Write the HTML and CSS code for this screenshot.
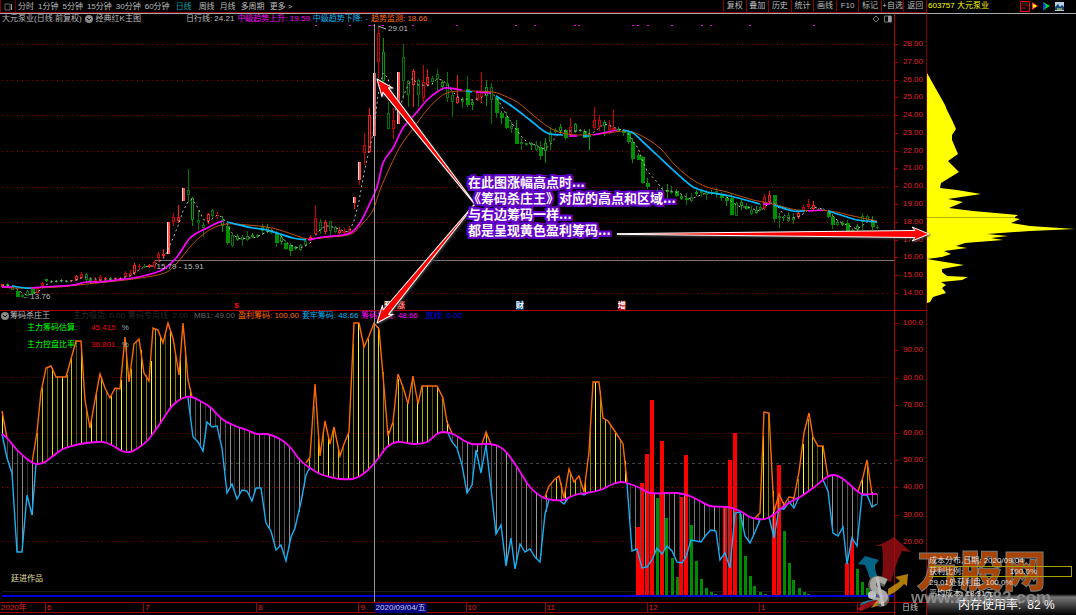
FILE: index.html
```html
<!DOCTYPE html>
<html lang="zh-CN">
<head>
<meta charset="utf-8">
<title>大元泵业 603757</title>
<link rel="stylesheet" href="styles.css">
</head>
<body>
<div class="app">
  <main class="main">
    <nav class="toolbar">
      <button class="layout-btn" aria-label="布局"><svg width="9" height="8" viewBox="0 0 9 8"><path d="M1 1h5v6h-5z" fill="none" stroke="#666"/><path d="M7.500 1v6" stroke="#999"/></svg></button>
      <div class="periods">
        <button>分时</button><button>1分钟</button><button>5分钟</button><button>15分钟</button><button>30分钟</button><button>60分钟</button><button class="active">日线</button><button>周线</button><button>月线</button><button>多周期</button><button>更多 &gt;</button>
      </div>
      <div class="tools">
        <button>复权</button><button>叠加</button><button>历史</button><button>统计</button><button>画线</button><button>F10</button><button>标记</button><button>+自选</button><button>返回</button>
      </div>
    </nav>

    <section class="pane price">
      <svg class="plot" id="price" viewBox="0 14 894 296" preserveAspectRatio="none"></svg>
      <header class="legend">
        <span>大元泵业(日线.前复权)</span>
        <svg class="dot" viewBox="0 0 8 8"><circle cx="4" cy="4" r="4" fill="#888"/><path d="M2 3l2 2 2-2" fill="none" stroke="#111"/></svg>
        <span class="name-main">经典红K主图</span>
        <span>日行线: 24.21</span><span class="magenta">中级趋势上升: 19.59</span><span class="cyan">中级趋势下降: -</span><span class="orange">趋势监测: 18.66</span>
        <svg class="corner" viewBox="0 0 20 8"><path d="M4 1l3 3-3 3-3-3z" fill="none" stroke="#777"/><path d="M12.500 1h7v6h-7z" fill="none" stroke="#777"/><path d="M16 1h3v6h-3z" fill="#999"/></svg>
      </header>
      <span class="tag high">29.01</span>
      <span class="tag low">←13.76</span>
      <span class="tag range">15.79 - 15.91</span>
      <span class="mark m1">$</span><span class="mark m2">预</span><span class="mark m3">涨</span><span class="mark m4">财</span><span class="mark m5">增</span>
    </section>
    <aside class="axis axis-price" id="axisPrice"></aside>

    <section class="pane chips">
      <svg class="plot" id="chips" viewBox="0 311 894 291" preserveAspectRatio="none"></svg>
      <div class="over">
        <header class="legend">
          <svg class="dot" viewBox="0 0 8 8"><circle cx="4" cy="4" r="4" fill="#888"/><path d="M2 3l2 2 2-2" fill="none" stroke="#111"/></svg>
          <span class="name-sub">筹码杀庄王</span>
          <span class="faint">主力吸货: 0.00</span><span class="faint name-line">筹码专用线: 2.00</span><span class="dim">MB1: 49.00</span><span class="orange">盈利筹码: 100.00</span><span class="cyan">套牢筹码: 48.66</span><span class="magenta">筹码均线: 48.66</span><span class="blue">底线: 0.00</span>
        </header>
        <dl class="stats">
          <dt>主力筹码估算:</dt><dd>45.415 <i>%</i></dd>
          <dt>主力控盘比率:</dt><dd>36.801 <i>%</i></dd>
        </dl>
        <p class="author">廷进作品</p>
      </div>
    </section>
    <aside class="axis axis-chips" id="axisChips"></aside>

    <footer class="timeline">
      <span>2020年</span><span>6</span><span>7</span><span>8</span><span>9</span><span>10</span><span>11</span><span>12</span><span>1</span><span>2</span>
      <time class="cursor-date">2020/09/04/五</time>
    </footer>
    <div class="period">日线</div>
  </main>

  <aside class="side">
    <header class="stock"><span>603757 大元泵业</span>
      <svg class="flags" viewBox="0 0 44 11"><path d="M.5.500h9v10h-9z" fill="none" stroke="#f00"/><path d="M2 4h6M2 7h4" stroke="#a00"/><path d="M2 2h6" stroke="#053"/><path d="M12 1l6 4-6 4z" fill="#f33"/><path d="M13 3l4 2-4 2z" fill="#ff0"/><path d="M23 1l7 4-5 3-2 2 2-5z" fill="#0d3"/><path d="M23 1l3 4-3 5z" fill="#13f"/><path d="M35 1h9v9h-9z" fill="#bcd"/><path d="M35 6l3-3 2 3 2-2 2 2v3h-9z" fill="#147"/><path d="M37 8h5" stroke="#ee4"/></svg>
    </header>
    <svg class="dist" viewBox="0 14 149 580" preserveAspectRatio="none"><path fill="#ff0" d="M0 73L18 105 20 110 25 120 29 129 25 135 25 140 31 154 21 161 32 172 14 183 13 188 30 190 54 194 21 199 36 202 22 208 46 211 91 215 88 217 88 218 93 219 84 223 103 226 148 229 103 231 60 234 81 236 64 238 76 240 38 243 29 246 40 248 17 251 24 254 15 257 0 259 18 262 37 265 15 269 15 272 20 276 41 277 35 280 14 282 19 285 15 288 19 293 6 297 3 302 0 303z"/><path d="M0 217.500h88" stroke="#b5b500"/></svg>
    <div class="info">
      <p>成本分布,日期: 2020/09/04</p>
      <p class="ratio">获利比例: <b>100.0%</b></p>
      <p>29.01处获利盘: 100.0%</p>
      <p>平均成本: 18.31元</p>
    </div>
    <div class="memory">内存使用率:&ensp;82 %</div>
  </aside>

  <svg class="arrows" id="arrows" viewBox="0 0 1076 615" preserveAspectRatio="none"></svg>
  <p class="note">在此图涨幅高点时...<br>《筹码杀庄王》对应的高点和区域...<br>与右边筹码一样...<br>都是呈现黄色盈利筹码...</p>

  <div class="brand">
    <svg class="brand-logo" viewBox="850 534 64 76">
      <path fill="#9d1015" d="M894 536l17 15-9-1q-6 12-11 31l-9-3q2-18 0-33l-8 0q10-2 20-9z"/>
      <path fill="#087fa8" d="M858 563l7-8 14 4-4 5q0 7 3 12l-8 2q-2-7-5-14z"/>
      <path fill="#d99a08" d="M888 588q8-5 12-8l-5-4 13-3-1 12-3-2q-6 7-16 12z"/>
      <path fill="none" stroke="#76716a" stroke-width="9" d="M886 582q-15-7-13 4c1 7 12 5 12 12q-2 6-13 1"/>
      <path fill="none" stroke="#d3d0c8" stroke-width="6" d="M886 581q-14-7-13 4c1 7 13 5 12 12q-2 5-12 1"/>
      <path fill="none" stroke="#eee" stroke-width="3" d="M877 576l6 29"/>
      <circle cx="872" cy="594" r="4" fill="#e9efe4"/>
      <path fill="#16a0bd" d="M861 602q9-4 15-3l-3 3-13 2z"/><path fill="#b51218" d="M857 608q11-9 21-9l-6 6-11 5z"/><path fill="#dca015" d="M871 607q4-6 8-7l-2 5z"/>
    </svg>
    <div class="brand-text"><strong>万股网</strong><a href="#">www.201082.com</a></div>
  </div>
</div>
<script src="chart.js"></script>
</body>
</html>
```
FILE: styles.css
```css
* { box-sizing: border-box; }
body, p, dl, dd { margin: 0; }
body {
  background: #000;
  color: #bbb;
  font: 8px/10px "Liberation Sans", "Noto Sans CJK SC", sans-serif;
  overflow: hidden;
}
button { font: inherit; color: inherit; background: none; border: 0; padding: 0; white-space: nowrap; }
i { font-style: normal; }
.app {
  position: relative;
  display: grid;
  grid-template-columns: minmax(0, 1fr) 149px;
  height: 100vh;
}
.main {
  display: grid;
  grid-template-columns: minmax(0, 1fr) 33px;
  grid-template-rows: 14px minmax(0, 297fr) minmax(0, 291fr) 13px;
  min-width: 0;
}
.toolbar {
  grid-column: 1 / -1;
  display: flex;
  border-bottom: 1px solid #aaa;
  border-right: 1px solid #900;
  box-shadow: inset 0 -1px #800;
}
.layout-btn { width: 16px; border-left: 1px solid #800; border-right: 1px solid #600; display: flex; align-items: center; justify-content: center; }
.periods { display: flex; align-items: center; gap: 4px; padding-left: 2px; flex: 1; }
.periods .active { color: #00a5b5; padding: 0 2px; margin-right: 1px; }
.periods button:nth-child(n+8) { margin-right: 1px; }
.tools { display: grid; grid-template-columns: repeat(9, 1fr); width: 203px; }
.tools button { border-left: 1px solid #800; height: 12px; }

.pane { position: relative; display: grid; min-width: 0; min-height: 0; }
.plot { grid-area: 1 / 1; width: 100%; height: 100%; display: block; min-height: 0; }
.price, .axis-price { border-bottom: 1px solid #a00; }
.legend { grid-area: 1 / 1; display: flex; gap: 3px; height: 10px; white-space: nowrap; z-index: 1; }
.price .legend { padding: 0 2px; align-self: start; }
.dot { width: 8px; height: 8px; margin-top: 1px; }
.name-main { margin-right: 42px; }
.name-sub { margin: 0 20px 0 -2px; }
.name-line { margin-right: 3px; }
.corner { width: 20px; height: 8px; margin: 1px 0 0 auto; }
.magenta { color: #f0f; }
.cyan { color: #00b4f0; }
.orange { color: #ff6a00; }
.blue { color: #0000e8; margin-left: 5px; }
.faint { color: #292929; }
.dim { color: #666; }
.tag { position: absolute; white-space: nowrap; }
.high { left: 43.4%; top: 3.400%; }
.low { left: 2.500%; top: 94%; }
.range { left: 17.500%; top: 83.800%; }
.mark { position: absolute; bottom: 0; width: 8px; text-align: center; line-height: 9px; color: #fff; font-weight: bold; }
.m1 { left: 26%; color: #f00; }
.m2 { left: 43%; background: #840; }
.m3 { left: 44.400%; color: #f88; background: #500; }
.m4 { left: 57.700%; background: #047; }
.m5 { left: 69.100%; background: #a00; }

.axis {
  display: flex;
  flex-direction: column;
  justify-content: space-between;
  min-height: 0;
  border-left: 1px solid #a00;
  border-right: 1px solid #700;
  color: #e0202a;
}
.axis span { position: relative; padding-left: 8px; }
.axis span::before { content: ""; position: absolute; left: 0; top: 5px; width: 3px; border-top: 1px solid #a00; }
.axis-price { padding: 25px 0 12px; }
.axis-chips { padding: 7px 0 55px; }

.over { grid-area: 1 / 1; display: flex; flex-direction: column; z-index: 1; }
.chips .legend { padding-left: 1px; }
.stats { display: grid; grid-template-columns: 64px auto; row-gap: 7px; padding: 2px 0 0 27px; color: #e00; }
.stats dt { color: #0f0; }
.stats i { color: #9ab; margin-left: 4px; }
.author { margin: auto 0 18px 11px; color: #e8e0a0; }

.timeline {
  position: relative;
  display: grid;
  grid-template-columns: 45fr 98fr 113fr 102fr 107fr 79fr 102fr 112fr 98fr 37fr;
  border-top: 1px solid #900;
  box-shadow: inset 0 -2px #000, inset 0 -3px #900;
  color: #e02020;
}
.timeline span { border-left: 1px solid #900; padding-left: 1px; height: 10px; }
.timeline span:first-child { border: 0; }
.cursor-date { position: absolute; left: 41.900%; top: 0; background: #000080; color: #ccd; padding: 0 1px; white-space: nowrap; }
.period { border: solid #a00; border-width: 1px 1px 0 1px; padding-left: 7px; color: #ccc; }

.side { display: grid; grid-template-rows: 14px minmax(0, 580fr) 21px; min-width: 0; }
.stock { display: flex; justify-content: space-between; border-bottom: 1px solid #aaa; color: #ff0; padding: 1px 12px 0 1px; }
.flags { width: 44px; height: 11px; }
.dist { grid-area: 2 / 1; width: 100%; height: 100%; display: block; min-height: 0; }
.info { grid-area: 2 / 1; align-self: end; padding-left: 2px; line-height: 11px; white-space: nowrap; color: #ddd; height: 39px; z-index: 5; }
.ratio { display: flex; justify-content: space-between; margin-right: 4px; border: 1px solid #aaa000; border-left: 0; line-height: 9px; }
.ratio b { font-weight: normal; margin-right: 34px; }
.memory {
  background: linear-gradient(#000, #777 15%, #222 75%, #000);
  color: #fff;
  font-size: 12px;
  line-height: 23px;
  padding-left: 31px;
  white-space: nowrap;
  overflow: hidden;
}

.arrows { position: absolute; inset: 0; width: 100%; height: 100%; filter: drop-shadow(1px 1px 1px #444); pointer-events: none; z-index: 2; }
.note {
  position: absolute;
  left: 43.500%;
  top: 28.300%;
  z-index: 3;
  color: #fff;
  font: bold 13px/16px "Noto Sans CJK SC", sans-serif;
  white-space: nowrap;
  text-shadow: 2px 0 #60c, -2px 0 #60c, 0 2px #60c, 0 -2px #60c, 2px 2px #60c, -2px 2px #60c, 2px -2px #60c, -2px -2px #60c, 0 0 3px #60c;
}
.brand { position: absolute; right: 24px; bottom: 8px; z-index: 4; display: flex; align-items: flex-end; opacity: .8; }
.brand-logo { width: 64px; height: 76px; margin: 0 -4px -4px 0; }
.brand-text { display: flex; flex-direction: column; width: 142px; }
.brand-text strong {
  font: 900 43px/42px "Noto Sans CJK SC", sans-serif;
  color: #d35400;
  -webkit-text-stroke: 1px #999;
  margin-left: 7px;
}
.brand-text a { font: bold 17px/18px "Liberation Sans", sans-serif; color: #999; text-decoration: none; margin-left: 1px; }
```
FILE: chart.js
```js
const NS = 'http://www.w3.org/2000/svg';
function add(parent, tag, attrs) {
  const el = document.createElementNS(NS, tag);
  for (const k in attrs) el.setAttribute(k, attrs[k]);
  parent.appendChild(el);
  return el;
}
const pts = s => s.split(' ').map(p => p.split(',').map(Number));
const line = (svg, s, stroke, width, extra) =>
  add(svg, 'polyline', Object.assign({ points: s, fill: 'none', stroke, 'stroke-width': width }, extra));
/* a curve through all the points, with tangents taken from their neighbours */
function curve(svg, s, stroke, width) {
  const p = pts(s);
  let d = 'M' + p[0];
  for (let i = 0; i < p.length - 1; i++) {
    const a = p[i - 1] || p[i], b = p[i], c = p[i + 1], e = p[i + 2] || c;
    const third = (c[0] - b[0]) / 3;
    const m1 = (c[1] - a[1]) / (c[0] - a[0]), m2 = (e[1] - b[1]) / (e[0] - b[0]);
    d += `C${b[0] + third} ${b[1] + m1 * third} ${c[0] - third} ${c[1] - m2 * third} ${c[0]} ${c[1]}`;
  }
  add(svg, 'path', { d, fill: 'none', stroke, 'stroke-width': width });
}
const rect = (svg, x, y, w, h, fill) =>
  add(svg, 'rect', { x, y, width: w, height: h, fill, 'shape-rendering': 'crispEdges' });
function valueAt(list, x) {
  for (let i = 1; i < list.length; i++) {
    const [x0, y0] = list[i - 1], [x1, y1] = list[i];
    if (x >= x0 && x <= x1) return y0 + (y1 - y0) * (x - x0) / (x1 - x0 || 1);
  }
  return null;
}
function labels(id, from, to, step, digits) {
  for (let v = from; v >= to; v -= step) {
    const s = document.createElement('span');
    s.textContent = v.toFixed(digits(v));
    document.getElementById(id).appendChild(s);
  }
}
labels('axisPrice', 28, 14, 1, () => 2);
labels('axisChips', 100, 20, 10, v => v === 100 ? 1 : 2);

/* price chart */
const price = document.getElementById('price');
const grid = (svg, y, color, dash) =>
  line(svg, `2,${y + .5} 892,${y + .5}`, color, 1, { 'stroke-dasharray': dash, 'shape-rendering': 'crispEdges' });
[44, 80, 115, 151, 187, 222, 257, 293].forEach(y => { grid(price, y, '#300', '1 2'); grid(price, y, '#800', '1 4'); });
line(price, '155,260.5 894,260.5', '#777', 1);
[315, 349, 369, 373, 382, 412, 456, 515, 534, 574, 578, 632, 637, 647, 671, 701, 710, 749, 813].forEach(x => rect(price, x, 25, 2, 1, '#f0f'));

/* each item: x, kind, high, body top, body bottom, low */
const candles = `2r284,284,287,288 7g283,284,286,287 12g287,287,290,290 17G290,291,297,297 22g294,295,297,298 27g290,291,296,296 32G287,288,294,294 37r287,288,293,293 42r282,283,286,287 46g279,279,281,282 51g280,281,282,283 56g280,281,282,283 61g279,280,281,282 66g280,281,282,283 71r280,280,281,282 76r275,276,280,281 81r272,274,278,279 86g273,274,280,281 90g278,279,281,284 95r277,280,282,284 100r275,277,281,282 105r277,278,279,280 110g277,278,280,281 115r277,278,279,280 120r277,278,279,280 125r271,273,277,278 130r270,273,276,277 134r263,265,273,275 139r264,266,267,270 144g264,266,267,268 149r264,265,267,268 154r260,262,267,269 158r252,254,258,262 163r249,254,256,257 168W222,222,254,254 173r213,217,222,226 178r205,217,221,223 183W188,188,201,201 188g169,190,195,202 192g197,198,220,226 198g210,220,223,230 203g222,225,228,237 208r213,214,221,224 212g209,210,216,219 217r212,215,216,219 222g216,220,226,232 227G224,226,243,245 232g234,235,246,247 237g234,236,240,241 242g235,237,240,246 247g231,236,240,241 252g233,235,237,238 257g234,235,237,238 262g224,227,231,235 267g224,227,232,233 271g229,230,233,234 276G231,233,243,247 281g234,237,242,245 285G240,243,249,250 290G243,245,251,256 295g246,247,249,250 300g244,245,250,251 305g238,241,245,247 310r235,237,239,241 315r205,218,234,235 320g219,222,230,234 325r220,222,232,234 330g221,221,231,236 335g226,227,232,233 339r227,230,233,234 344r228,231,233,234 349r226,229,233,234 354W197,197,203,209 359W162,162,180,185 364r133,145,153,165 369r108,115,152,153 374W73,73,136,136 378r27,33,62,78 383g38,52,81,85 388g102,113,129,129 393r108,120,129,139 398W72,72,124,124 403g44,57,81,99 408g80,81,95,107 413r69,71,85,107 418g79,80,95,107 423r65,82,98,102 427r69,77,85,86 432g76,78,82,85 437g69,74,79,91 442g80,82,87,90 447g72,83,98,102 452g92,95,102,117 457r75,97,103,104 462g97,99,102,108 467G76,89,105,107 472g99,102,105,110 477r90,92,100,101 481r72,92,97,103 486g80,87,96,106 491g83,87,100,124 496G95,97,113,118 501G111,113,118,124 506G112,117,128,129 511g122,126,129,133 516G120,128,144,144 521g138,142,144,150 526g143,143,145,146 531g142,143,145,150 536g141,145,150,151 540G141,147,156,160 545g138,143,151,163 550g127,132,142,150 555g128,130,132,133 560g124,127,131,134 565G129,130,138,140 570r118,127,135,137 575g123,124,132,133 580g129,130,131,132 584G129,131,138,138 589g129,135,137,150 594r107,120,128,130 599r115,120,127,131 604g120,122,126,136 609r120,125,130,134 613r110,128,130,131 618g127,129,131,132 623G129,130,133,136 628G130,132,142,144 632G138,142,159,163 638G153,155,160,160 642G156,157,183,184 647G178,183,187,189 657g188,190,192,197 662g187,190,191,196 667g184,190,192,198 671g186,191,193,194 676G189,191,196,197 681g194,196,199,200 686G193,198,200,205 691g193,197,201,202 696g190,192,194,196 701g189,191,193,197 706g190,192,195,200 711g190,192,194,195 716g188,191,193,198 721G192,194,198,201 726G196,198,201,206 731G194,198,215,215 736g202,203,216,216 741g199,202,206,210 746G203,206,209,210 751g206,210,214,215 756g206,210,213,214 760g204,207,210,211 764r194,197,208,210 769r191,195,202,203 774G195,195,219,223 779g213,216,218,228 783g216,217,218,221 788g212,215,221,222 793g213,217,220,224 798r211,213,217,219 803r205,207,211,213 808r199,204,207,209 813r201,205,209,210 818g208,209,211,211 823g208,210,211,211 828G210,212,217,218 832G214,217,225,229 837g220,222,225,226 842g221,223,225,226 847G220,223,231,232 852g228,230,231,232 857g224,226,230,231 862g213,216,222,230 867g215,216,221,222 872G216,220,227,230 877g225,227,228,229`;
const closes = [];
candles.split(' ').forEach((c, i) => {
  const m = c.match(/^(\d+)([rgGW])(.*)$/);
  const x = +m[1], kind = m[2], [high, top, bottom, low] = m[3].split(',').map(Number);
  closes.push([x, (top + bottom) / 2]);
  const color = kind === 'r' || kind === 'W' ? (i % 3 ? '#d00000' : '#ff1a1a') : (i % 3 ? '#007800' : '#009a00');
  if (kind === 'W') {
    if (low > bottom) rect(price, x, bottom, 1, low - bottom, color);
    rect(price, x - 1, top, 3, bottom - top, '#ff5050');
    rect(price, x - 1, top, 1, bottom - top, '#ffdcdc');
    return;
  }
  if (top > high) rect(price, x, high, 1, top - high, color);
  if (low > bottom) rect(price, x, bottom, 1, low - bottom, color);
  if (kind === 'G') { rect(price, x - 1, top, 4, bottom - top, '#009000'); return; }
  const h = Math.max(bottom - top, 1);
  rect(price, x - 1, top, 3, h, color);
  if (h > 2) rect(price, x, top + 1, 1, h - 2, '#000');
});
const average = closes.map((p, i) => {
  const part = closes.slice(Math.max(0, i - 2), i + 1);
  return [p[0], part.reduce((s, q) => s + q[1], 0) / part.length];
});
line(price, average.map(p => p[0] + ',' + p[1].toFixed(0)).join(' '), '#bbb', 1, { 'stroke-dasharray': '2 3' });

curve(price, '2,287 12,288 30,288 60,287 87,284 117,281 147,277 167,272 177,263 190,247 200,237 213,228 227,224 247,225 267,227 283,231 300,237 310,239 330,237 343,236 353,233 363,223 373,210 380,190 390,167 400,147 412,130 427,110 440,97 450,92 467,91 493,92 500,94 517,102 533,115 550,128 567,134 587,135 600,134 627,131 640,135 660,148 673,163 690,178 707,187 727,192 753,200 773,204 797,210 830,211 853,216 877,221', '#c05000', 1);
[
  ['m', '2,287 12,287'], ['c', '12,286 25,288 31,288'],
  ['m', '31,288 43,287 60,286 73,285 87,282 100,282 117,280 133,278 147,275 160,271 168,266 177,257 183,248 190,238 197,233 205,229 217,223 223,221'],
  ['c', '227,222 253,228 267,230 280,234 293,238 306,240'],
  ['m', '308,240 323,237 343,235 352,232 360,223 370,203 377,187 383,163 393,148 403,128 417,112 427,100 437,92 445,88 462,90'],
  ['c', '466,91 472,92'], ['m', '476,92 490,93'],
  ['c', '496,96 513,107 530,120 547,133 563,135'], ['m', '569,136 577,136'], ['c', '583,136 589,136'],
  ['m', '593,135 617,130'], ['c', '623,130 633,133 643,142 657,155 673,170 683,179 693,187 707,192 730,196 760,204'],
  ['m', '763,204 770,204'], ['c', '774,205 793,211 805,211'], ['m', '808,211 823,210'],
  ['c', '828,211 847,217 857,220 877,222']
].forEach(([k, s]) => curve(price, s, k === 'm' ? '#f0f' : '#00b8ff', 1.7));
line(price, '378,26 386,29', '#bbb', 1);
rect(price, 374, 24, 1, 286, '#999');

/* chip indicator */
const chips = document.getElementById('chips');
[377, 433, 487, 541].forEach((y, i) => { grid(chips, y, '#400', '1 2'); grid(chips, y, i === 2 ? '#a00' : '#600', '1 4'); });
grid(chips, 463, '#444', '3 3');
grid(chips, 591, '#1a1a1a', '0');

const mean = '2,434 7,438 17,450 27,459 33,463 38,464 45,462 53,456 63,449 80,444 97,442 107,443 115,447 122,451 130,452 138,448 147,441 157,428 167,413 173,405 183,398 192,397 200,401 210,407 222,419 233,425 247,430 257,434 267,434 280,439 290,447 300,460 310,468 320,474 330,477 340,479 352,479 360,476 368,470 377,460 387,447 398,442 413,444 427,442 437,434 443,432 453,434 463,440 472,444 490,444 500,447 507,453 517,467 530,487 542,497 553,500 563,500 575,495 587,493 600,490 613,484 622,482 630,484 640,488 650,493 677,493 690,496 700,501 710,506 727,507 740,511 750,517 758,519 765,519 773,515 783,507 792,501 800,497 813,488 827,477 833,475 840,477 848,483 857,491 862,494 877,494';
const profit = [
  '2,411 7,438',
  '32,463 37,432 41,392 46,368 51,366 56,377 66,377 76,341 81,341 85,400 90,428 95,400 100,374 105,388 110,398 115,388 120,389 125,337 129,382 134,344 139,339 144,373 149,381 153,328 158,330 163,343 168,323 173,338 179,375 183,323 188,380 192,397',
  '306,463 310,457 315,384 320,456 325,421 330,444 334,427 340,456 344,444 349,432 354,323 359,323 364,347 369,336 374,323 379,329 384,387 388,436 393,422 398,374 403,387 408,404 413,376 418,404 422,386 437,386 443,398 447,422 452,433',
  '482,444 486,432 491,444',
  '545,497 549,486 554,480 559,476 564,498 569,469 574,482 579,476 584,492 589,452 593,382 599,382 603,418 608,421 618,436 623,444 627,482',
  '755,518 760,513 764,412 769,413 774,512 779,494 784,505 789,497 794,498 799,472 804,433 809,413 813,437 818,446 823,446 828,477',
  '858,491 863,477 867,460 872,494'
];
const locked = [
  '2,434 7,458 12,473 17,552 22,552 27,495 32,515 36,464',
  '188,398 193,437 198,442 203,451 207,422 212,427 217,426 222,448 227,493 232,484 237,499 242,490 247,491 252,501 256,488 261,488 266,523 271,531 276,550 281,545 286,561 291,537 295,528 301,502 306,475 310,467',
  '448,433 452,442 457,448 462,465 467,493 472,485 476,450 481,473 486,445 491,488 496,534 501,525 506,566 511,538 515,569 520,544 525,552 530,549 535,557 540,562 545,514 549,500',
  '559,500 564,504 569,497', '580,493 584,495 589,492',
  '627,483 632,551 637,549 642,568 647,567 652,560 657,548 662,554 667,546 672,551 677,562 682,563 686,557 691,540 701,542 706,535 711,530 716,531 720,560 725,553 730,568 735,513 740,512 745,536 750,543 755,532 760,520',
  '769,517 774,538 779,509 784,509 789,502 794,508 799,497',
  '823,480 828,491 833,533 838,536 843,527 847,564 852,538 857,546 862,495 867,495 872,507 877,504'
];
pts('638,527 642,483 647,454 652,400 662,441 681,497 686,455 725,507 730,460 735,433 774,513 779,465 847,563 852,540')
  .forEach(([x, y]) => rect(chips, x - 2, y, 4, 596 - y, '#f00'));
pts('657,498 666,518 672,558 677,577 691,525 696,561 701,579 706,588 711,592 715,594 740,514 745,556 750,576 754,586 760,592 765,594 784,531 789,563 793,580 799,588 804,592 808,594 857,569 862,582 867,588')
  .forEach(([x, y]) => rect(chips, x - 1, y, 3, 596 - y, '#008c00'));

const meanPts = pts(mean);
const yellows = ['#ffff20', '#a8a800', '#c8c800', '#5c5400', '#e0e000', '#8c8400'];
const grays = ['#999', '#444', '#777', '#555', '#888', '#333'];
for (let i = 0; i < 178; i++) {
  const x = 2.3 + 4.94 * i, base = valueAt(meanPts, x);
  const hatch = (sets, palette) => sets.forEach(s => {
    const y = valueAt(pts(s), x);
    if (y === null || base === null) return;
    rect(chips, Math.round(x), Math.min(y, base), 1, Math.abs(y - base), palette[i % 6]);
  });
  hatch(profit, yellows);
  hatch(locked, grays);
}
profit.forEach(s => line(chips, s, '#ff6a00', 1.4));
locked.forEach(s => line(chips, s, '#18b0f4', 1.4));
curve(chips, mean, '#f0f', 1.8);
line(chips, '2,596 894,596', '#0000d8', 2);
rect(chips, 374, 311, 1, 291, '#999');

/* pointers from the note to the charts */
const arrows = document.getElementById('arrows');
[[377, 79, 474, 203], [377, 323, 474, 205], [929, 234, 617, 234]].forEach(([x, y, tx, ty]) => {
  const len = Math.hypot(tx - x, ty - y), angle = Math.atan2(ty - y, tx - x) * 180 / Math.PI;
  add(arrows, 'path', {
    d: `M0 0L17 -7L14 -3.5L${len} -.3L${len} .3L14 3.5L17 7z`,
    transform: `translate(${x} ${y}) rotate(${angle})`,
    fill: '#f00', stroke: '#fff', 'stroke-width': 1, 'stroke-linejoin': 'round'
  });
});
```
